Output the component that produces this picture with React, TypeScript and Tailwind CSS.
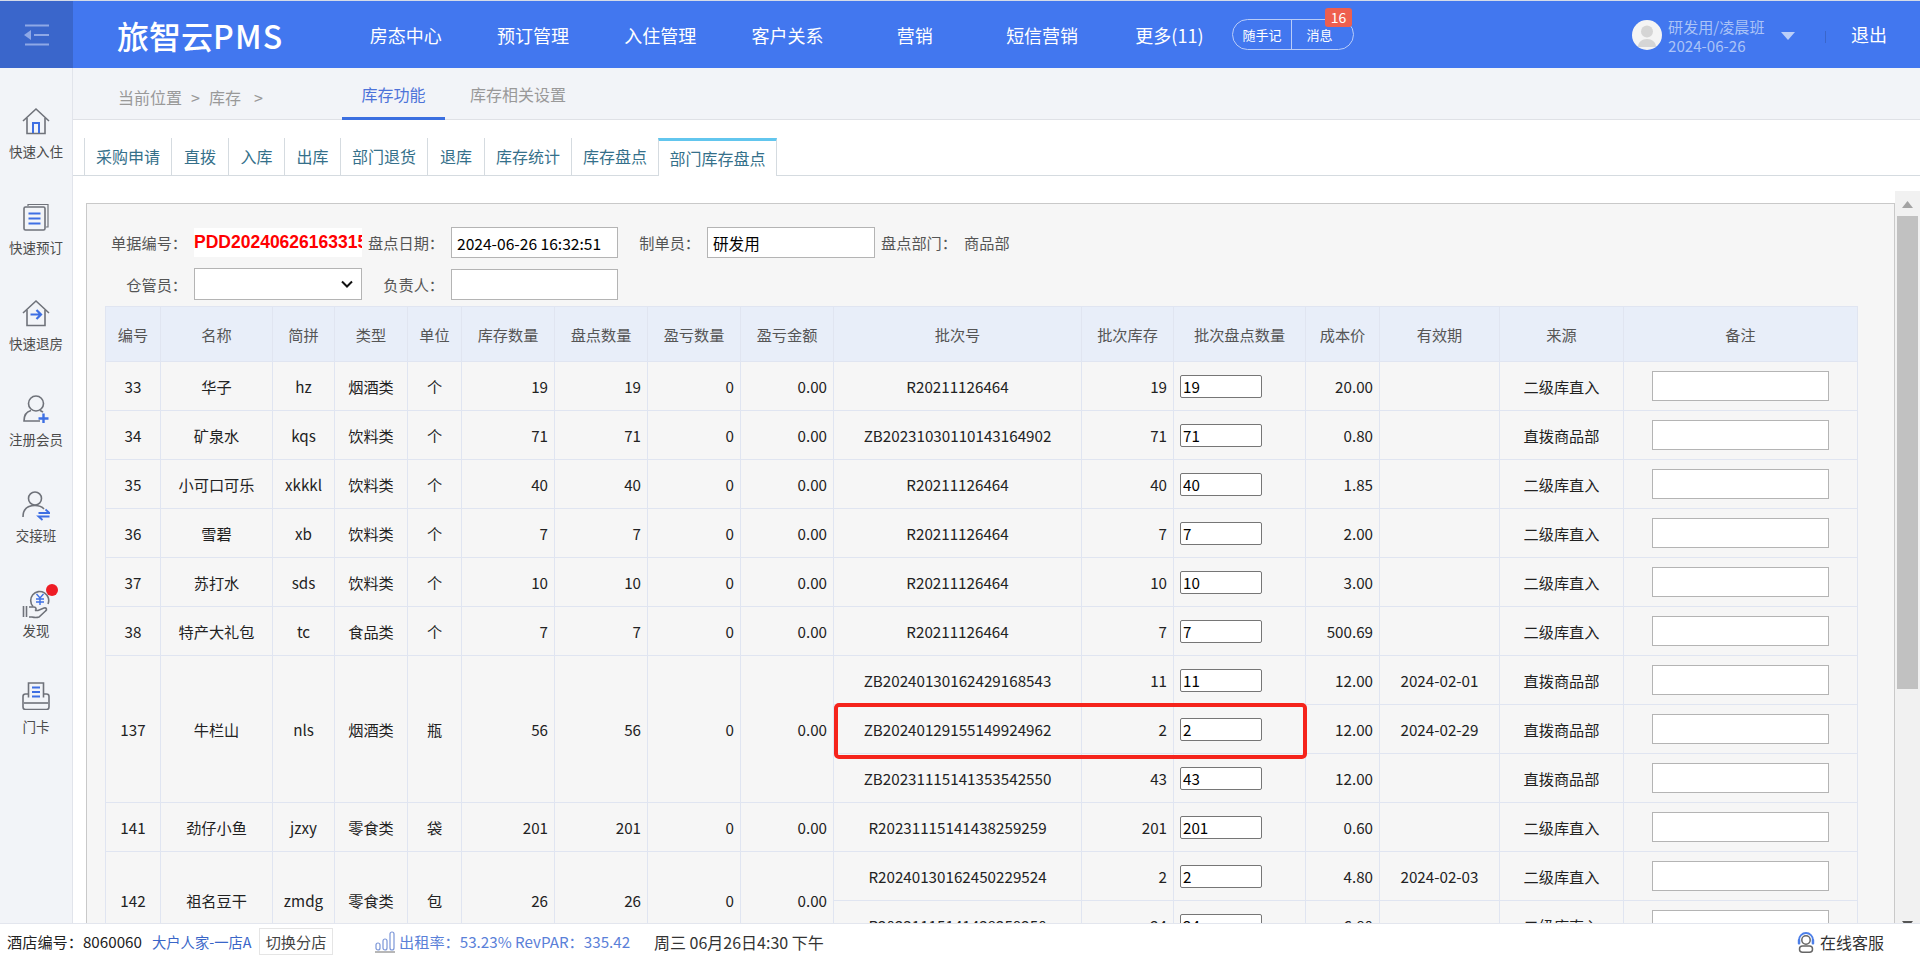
import React from "react"

const GRAY = "#6f727a"
const BLUE = "#3e6fe3"

function HouseIcon() {
  return (
    <svg viewBox="0 0 28 28" className="h-7 w-7" fill="none" strokeWidth="1.6">
      <path d="M1 14 14 2l13 12" stroke={GRAY} />
      <path d="M5 11v15.500h18V11" stroke={GRAY} />
      <path d="M11 26V16h6v10" stroke={BLUE} strokeWidth="2" />
    </svg>
  )
}

function DocIcon() {
  return (
    <svg viewBox="0 0 28 28" className="h-7 w-7" fill="none" strokeWidth="1.6">
      <path d="M6 3V1.500h20V24h-2" stroke={GRAY} strokeWidth="1.200" />
      <rect x="2" y="4" width="21" height="23" rx="1.500" stroke={GRAY} />
      <path d="M6.500 10.500h12M6.500 15.500h12M6.500 20.500h12" stroke={BLUE} strokeWidth="2.200" />
    </svg>
  )
}

function CheckoutIcon() {
  return (
    <svg viewBox="0 0 28 28" className="h-7 w-7" fill="none" strokeWidth="1.6">
      <path d="M1 14 14 2l13 12" stroke={GRAY} />
      <path d="M5 11v15.500h18V11" stroke={GRAY} />
      <path d="M8.500 15.500h10M14.500 11l4.500 4.500-4.500 4.500" stroke={BLUE} strokeWidth="2.200" />
    </svg>
  )
}

function UserAddIcon() {
  return (
    <svg viewBox="0 0 28 28" className="h-7 w-7" fill="none" strokeWidth="1.6">
      <circle cx="14" cy="8.500" r="7.500" stroke={GRAY} />
      <path d="M18 26H2c0-6 3-9.500 7-10.500" stroke={GRAY} />
      <path d="M18 15.500c1.200.4 2.200 1 3 1.800" stroke={GRAY} />
      <path d="M16.500 23.500h10M21.500 18.500v10" stroke={BLUE} strokeWidth="2.400" />
    </svg>
  )
}

function UserSwapIcon() {
  return (
    <svg viewBox="0 0 28 30" className="h-[30px] w-7" fill="none" strokeWidth="1.6">
      <circle cx="13" cy="7.500" r="6.500" stroke={GRAY} />
      <path d="M1 26c0-7 4-11.500 12-11.500 4 0 7 1.200 9 3.500" stroke={GRAY} />
      <path d="M16.500 22h11L23.500 18.500M27.500 25.500h-11l4 3.500" stroke={BLUE} strokeWidth="1.800" />
    </svg>
  )
}

function FindIcon() {
  return (
    <svg viewBox="0 0 28 33" className="h-[33px] w-7" fill="none" strokeWidth="1.6">
      <path d="M11 20.500A9 9 0 1 1 26 18" stroke={GRAY} />
      <path d="M14.500 8l3.500 4 3.500-4M14 13h8M14 16h8M18 12v7" stroke={BLUE} strokeWidth="1.400" />
      <path d="M1.500 20v11M4.500 20v11" stroke={GRAY} />
      <path d="M7 21h5c2 0 3 2.500 1 3.500h3l6-2.500c2.500-.5 3.500 1.500 1.500 3L17 31c-3 1-5 .5-7 0H7" stroke={GRAY} />
    </svg>
  )
}

function CardIcon() {
  return (
    <svg viewBox="0 0 28 28" className="h-7 w-7" fill="none" strokeWidth="1.6">
      <path d="M6.500 15.500V1h15v14.500" stroke={GRAY} />
      <path d="M6 12H3.500C2 12 1 13 1 14.500V25c0 1.500 1 2.500 2.500 2.500h21C26 27.500 27 26.500 27 25V14.500c0-1.500-1-2.500-2.500-2.500H22" stroke={GRAY} />
      <path d="M2 21h24" stroke={GRAY} />
      <path d="M10 5.500h8M10 10h8M10 14.500h8" stroke={BLUE} strokeWidth="1.800" />
    </svg>
  )
}

const sideItems = [
  { label: "快速入住", icon: <HouseIcon /> },
  { label: "快速预订", icon: <DocIcon /> },
  { label: "快速退房", icon: <CheckoutIcon /> },
  { label: "注册会员", icon: <UserAddIcon /> },
  { label: "交接班", icon: <UserSwapIcon /> },
  { label: "发现", icon: <FindIcon />, dot: true },
  { label: "门卡", icon: <CardIcon /> },
]

const navItems = ["房态中心", "预订管理", "入住管理", "客户关系", "营销", "短信营销", "更多(11)"]

const tabs = [
  { label: "采购申请", width: "w-[87px]" },
  { label: "直拨", width: "w-[57px]" },
  { label: "入库", width: "w-[56px]" },
  { label: "出库", width: "w-[56px]" },
  { label: "部门退货", width: "w-[87px]" },
  { label: "退库", width: "w-[57px]" },
  { label: "库存统计", width: "w-[87px]" },
  { label: "库存盘点", width: "w-[87px]" },
]

const colWidths = [
  "w-[55px]", "w-[112px]", "w-[62px]", "w-[73px]", "w-[54px]", "w-[93px]", "w-[93px]", "w-[93px]",
  "w-[93px]", "w-[248px]", "w-[92px]", "w-[132px]", "w-[74px]", "w-[120px]", "w-[124px]", "w-[234px]",
]

const heads = [
  "编号", "名称", "简拼", "类型", "单位", "库存数量", "盘点数量", "盈亏数量", "盈亏金额",
  "批次号", "批次库存", "批次盘点数量", "成本价", "有效期", "来源", "备注",
]

type Batch = { no: string; qty: string; cost: string; expire?: string; source: string }
type Row = { id: string; name: string; py: string; type: string; unit: string; stock: string; batches: Batch[] }

const second = "二级库直入"
const direct = "直拨商品部"

const rows: Row[] = [
  { id: "33", name: "华子", py: "hz", type: "烟酒类", unit: "个", stock: "19", batches: [{ no: "R20211126464", qty: "19", cost: "20.00", source: second }] },
  { id: "34", name: "矿泉水", py: "kqs", type: "饮料类", unit: "个", stock: "71", batches: [{ no: "ZB20231030110143164902", qty: "71", cost: "0.80", source: direct }] },
  { id: "35", name: "小可口可乐", py: "xkkkl", type: "饮料类", unit: "个", stock: "40", batches: [{ no: "R20211126464", qty: "40", cost: "1.85", source: second }] },
  { id: "36", name: "雪碧", py: "xb", type: "饮料类", unit: "个", stock: "7", batches: [{ no: "R20211126464", qty: "7", cost: "2.00", source: second }] },
  { id: "37", name: "苏打水", py: "sds", type: "饮料类", unit: "个", stock: "10", batches: [{ no: "R20211126464", qty: "10", cost: "3.00", source: second }] },
  { id: "38", name: "特产大礼包", py: "tc", type: "食品类", unit: "个", stock: "7", batches: [{ no: "R20211126464", qty: "7", cost: "500.69", source: second }] },
  {
    id: "137", name: "牛栏山", py: "nls", type: "烟酒类", unit: "瓶", stock: "56",
    batches: [
      { no: "ZB20240130162429168543", qty: "11", cost: "12.00", expire: "2024-02-01", source: direct },
      { no: "ZB20240129155149924962", qty: "2", cost: "12.00", expire: "2024-02-29", source: direct },
      { no: "ZB20231115141353542550", qty: "43", cost: "12.00", source: direct },
    ],
  },
  { id: "141", name: "劲仔小鱼", py: "jzxy", type: "零食类", unit: "袋", stock: "201", batches: [{ no: "R20231115141438259259", qty: "201", cost: "0.60", source: second }] },
  {
    id: "142", name: "祖名豆干", py: "zmdg", type: "零食类", unit: "包", stock: "26",
    batches: [
      { no: "R20240130162450229524", qty: "2", cost: "4.80", expire: "2024-02-03", source: second },
      { no: "R20231115141438259250", qty: "24", cost: "6.80", source: second },
    ],
  },
]

const cell = "border border-[#e0e5f1] p-0 text-center"
const num = "border border-[#e0e5f1] py-0 pl-0 pr-[6px] text-right"
const fieldInput = "h-[31px] border border-[#b4b4b4] bg-white px-[5px] text-[15.6px] text-black outline-none"

function Header() {
  return (
    <header className="flex h-[67px] shrink-0 items-center bg-[#4277ef] text-white">
      <div className="flex h-full w-[73px] shrink-0 items-center justify-center bg-[#3a66cb]">
        <svg viewBox="0 0 26 22" className="h-[22px] w-[26px]" fill="none" stroke="#8ea8e6" strokeWidth="2">
          <path d="M1 1.500h24M10 11h15M1 20.500h24" />
          <path d="M0 11l7-5v10z" fill="#8ea8e6" stroke="none" />
        </svg>
      </div>
      <div className="ml-[44px] w-[225px] shrink-0 text-[32px] font-medium leading-none">
        旅智云<span className="tracking-[1.200px]">PMS</span>
      </div>
      <nav className="flex shrink-0 pt-[1px]">
        {navItems.map((item) => (
          <span key={item} className="w-[127.300px] text-center text-[18px]">{item}</span>
        ))}
      </nav>
      <div className="relative ml-[-1px] flex h-[31px] w-[122px] shrink-0 items-center rounded-full border border-[#b9ccf8] text-[13px]">
        <span className="w-[59px] border-r border-[#b9ccf8] text-center leading-[29px]">随手记</span>
        <span className="flex-1 pr-[6px] text-center">消息</span>
        <span className="absolute right-[1px] top-[-12px] flex h-[19px] w-[27px] items-center justify-center rounded-[3px] bg-[#ee5f4e] text-[14px]">16</span>
      </div>
      <div className="ml-[278px] flex h-[30px] w-[30px] shrink-0 items-end justify-center overflow-hidden rounded-full bg-[#f4f4f4]">
        <svg viewBox="0 0 30 30" className="h-[30px] w-[30px]">
          <circle cx="15" cy="11.500" r="6" fill="#d5d5d5" />
          <path d="M6 27c0-5 4-8 9-8s9 3 9 8z" fill="#d5d5d5" />
        </svg>
      </div>
      <div className="ml-[6px] w-[113px] shrink-0 pt-[2px] text-[15.100px] leading-[19px] text-[#abc3f7]">
        <div>研发用/凌晨班</div>
        <div>2024-06-26</div>
      </div>
      <svg viewBox="0 0 14 8" className="mt-[3px] h-2 w-[14px] shrink-0">
        <path d="M0 0h14L7 8z" fill="#bccff8" />
      </svg>
      <div className="ml-[30px] mt-[4px] h-3 w-px shrink-0 bg-[#3a66cb]" />
      <span className="ml-[25px] text-[18px]">退出</span>
    </header>
  )
}

function Sidebar() {
  return (
    <aside className="w-[73px] shrink-0 border-r border-[#e1e4eb] bg-[#f2f4f8] pt-[39px]">
      {sideItems.map((item) => (
        <div key={item.label} className="relative flex h-[95.900px] flex-col items-center">
          <div className="flex h-7 items-start justify-center">{item.icon}</div>
          <div className="mt-[8px] text-[13.500px] leading-4 text-[#4b4b4b]">{item.label}</div>
          {item.dot && <span className="absolute left-[46px] top-[-2px] h-3 w-3 rounded-full bg-[#ee1c25]" />}
        </div>
      ))}
    </aside>
  )
}

function InventoryTable() {
  return (
    <div className="relative ml-[18px] w-[1752px]">
      <table className="w-[1752px] table-fixed border-collapse text-[15.200px] text-[#222]">
        <colgroup>
          {colWidths.map((w, i) => (
            <col key={i} className={w} />
          ))}
        </colgroup>
        <thead>
          <tr className="h-[55px] bg-[#e8eef9] text-[#555]">
            {heads.map((h) => (
              <th key={h} className={cell + " font-normal"}>{h}</th>
            ))}
          </tr>
        </thead>
        <tbody>
          {rows.map((row) =>
            row.batches.map((b, i) => (
              <tr key={b.no + i} className="h-[49px]">
                {i === 0 && (
                  <>
                    <td rowSpan={row.batches.length} className={cell}>{row.id}</td>
                    <td rowSpan={row.batches.length} className={cell}>{row.name}</td>
                    <td rowSpan={row.batches.length} className={cell}>{row.py}</td>
                    <td rowSpan={row.batches.length} className={cell}>{row.type}</td>
                    <td rowSpan={row.batches.length} className={cell}>{row.unit}</td>
                    <td rowSpan={row.batches.length} className={num}>{row.stock}</td>
                    <td rowSpan={row.batches.length} className={num}>{row.stock}</td>
                    <td rowSpan={row.batches.length} className={num}>0</td>
                    <td rowSpan={row.batches.length} className={num}>0.00</td>
                  </>
                )}
                <td className={cell}>{b.no}</td>
                <td className={num}>{b.qty}</td>
                <td className={cell + " text-left"}>
                  <input defaultValue={b.qty} className="ml-[6px] block h-[23px] w-[82px] rounded-[2px] border border-[#767676] bg-white px-[2px] text-[15.200px] text-black outline-none" />
                </td>
                <td className={num}>{b.cost}</td>
                <td className={cell}>{b.expire}</td>
                <td className={cell}>{b.source}</td>
                <td className={cell}>
                  <input className="mx-auto block h-[30px] w-[177px] border border-[#b4b4b4] bg-white outline-none" />
                </td>
              </tr>
            ))
          )}
        </tbody>
      </table>
      <div className="absolute left-[729px] top-[397px] h-[56px] w-[473px] rounded-[5px] border-4 border-[#f5241c]" />
    </div>
  )
}

function Panel() {
  return (
    <section className="mt-[27px] h-[800px] w-[1809px] shrink-0 overflow-hidden border-x border-t border-[#c9c9c9] bg-[#f6f6f6]">
      <div className="mt-[23px] flex h-[31px] items-center text-[15.200px] text-[#555]">
        <label className="w-[100px] text-right">单据编号：</label>
        <div className="ml-[7px] h-[29px] w-[168px] overflow-hidden whitespace-nowrap bg-white font-['Liberation_Sans',sans-serif] text-[17.500px] font-bold leading-[29px] text-[#ff0000]">PDD202406261633155</div>
        <label className="w-[82px] text-right">盘点日期：</label>
        <input defaultValue="2024-06-26 16:32:51" className={"ml-[7px] w-[167px] " + fieldInput} />
        <label className="w-[82px] text-right">制单员：</label>
        <input defaultValue="研发用" className={"ml-[7px] w-[168px] " + fieldInput} />
        <label className="ml-[6px] w-[83px]">盘点部门：</label>
        <span>商品部</span>
      </div>
      <div className="mt-[10px] flex h-[32px] items-center text-[15.200px] text-[#555]">
        <label className="w-[100px] text-right">仓管员：</label>
        <div className="relative ml-[7px] h-[32px] w-[168px]">
          <select className="h-full w-full appearance-none border border-[#b4b4b4] bg-white outline-none" />
          <svg viewBox="0 0 12 8" className="pointer-events-none absolute right-[9px] top-[12px] h-2 w-3" fill="none" stroke="#111" strokeWidth="2">
            <path d="M1 1.500 6 6.500l5-5" />
          </svg>
        </div>
        <label className="w-[82px] text-right">负责人：</label>
        <input className={"ml-[7px] w-[167px] " + fieldInput} />
      </div>
      <div className="mt-[6px]">
        <InventoryTable />
      </div>
    </section>
  )
}

function Scrollbar() {
  return (
    <div className="relative mt-[15px] h-[740px] w-[25px] shrink-0 bg-[#f1f1f1]">
      <svg viewBox="0 0 11 7" className="absolute left-[7px] top-[10px] h-[7px] w-[11px]">
        <path d="M5.500 0 11 7H0z" fill="#a3a3a3" />
      </svg>
      <div className="absolute left-[2px] top-[25px] h-[473px] w-[21px] bg-[#c1c1c1]" />
      <svg viewBox="0 0 11 7" className="absolute left-[7px] top-[730px] h-[7px] w-[11px]">
        <path d="M0 0h11L5.500 7z" fill="#555" />
      </svg>
    </div>
  )
}

function BottomBar() {
  return (
    <footer className="flex h-[36px] shrink-0 items-center border-t border-[#e3e6ee] bg-white text-[15.200px] text-[#222]">
      <span className="ml-[7px] w-[138px]">酒店编号：8060060</span>
      <span className="ml-[7px] w-[107px] text-[14.300px] text-[#3a66c8]">大户人家-一店A</span>
      <span className="flex h-[27px] w-[74px] items-center justify-center border border-[#e5e5e5] text-[#444]">切换分店</span>
      <svg viewBox="0 0 20 22" className="ml-[42px] h-[22px] w-5" fill="none" stroke="#7b96d8" strokeWidth="1.200">
        <rect x="1" y="12" width="4" height="7" rx="2" />
        <rect x="8" y="8" width="4" height="11" rx="2" />
        <rect x="15" y="1" width="4" height="18" rx="2" />
        <path d="M0 21h20" stroke="#999" strokeWidth="1.400" />
      </svg>
      <span className="ml-[4px] w-[237px] whitespace-nowrap text-[#5a80d8]">出租率：53.23% RevPAR：335.42</span>
      <span className="ml-[18px] text-[16px] text-[#333]">周三 06月26日4:30 下午</span>
      <span className="ml-auto mr-[36px] flex items-center text-[16px] text-[#333]">
        <svg viewBox="0 0 18 22" className="mr-[5px] h-[22px] w-[18px]" fill="none" strokeWidth="1.500">
          <path d="M2 9a7 7 0 0 1 14 0" stroke="#4d7fe8" strokeWidth="1.800" />
          <rect x="0.800" y="8" width="2.500" height="5.500" rx="1" fill="#4d7fe8" />
          <rect x="14.700" y="8" width="2.500" height="5.500" rx="1" fill="#4d7fe8" />
          <circle cx="9" cy="9" r="4.200" stroke="#666" />
          <rect x="2.500" y="15" width="13" height="6.200" rx="3" stroke="#666" />
        </svg>
        在线客服
      </span>
    </footer>
  )
}

export default function App() {
  return (
    <div className="flex h-[959px] w-[1920px] flex-col overflow-hidden bg-white font-['Noto_Sans_CJK_SC','Liberation_Sans',sans-serif]">
      <div className="h-px shrink-0 bg-[#d5dbe8]" />
      <Header />
      <div className="flex min-h-0 flex-1">
        <Sidebar />
        <main className="flex min-w-0 flex-1 flex-col">
          <div className="flex h-[52px] shrink-0 items-stretch border-b border-[#dfe1e6] bg-[#f2f4f8] text-[16px] text-[#999]">
            <div className="ml-[45px] flex w-[224px] items-center pt-[6px]">
              <span>当前位置</span>
              <span className="ml-[9px]">&gt;</span>
              <span className="ml-[9px]">库存</span>
              <span className="ml-[13px]">&gt;</span>
            </div>
            <div className="flex h-[52px] w-[103px] items-center justify-center border-b-[3px] border-[#3b6fe0] pt-[2px] text-[#4d73d9]">库存功能</div>
            <div className="ml-[25px] flex items-center">库存相关设置</div>
          </div>
          <div className="flex h-[56px] shrink-0 items-end bg-white">
            <div className="flex h-[38px] flex-1 border-b border-[#d5dbe0] pl-[11px] text-[16px] text-[#35708a]">
              {tabs.map((t) => (
                <div key={t.label} className={t.width + " flex h-[37px] items-center justify-center border-y-0 border-l border-[#d5dbe0] pb-[2px]"}>{t.label}</div>
              ))}
              <div className="flex h-[38px] w-[119px] items-center justify-center border-x border-t-[3px] border-[#d5dbe0] border-t-[#62c6ee] bg-white pb-[1px]">部门库存盘点</div>
            </div>
          </div>
          <div className="flex min-h-0 flex-1 overflow-hidden bg-white pl-[13px]">
            <Panel />
            <Scrollbar />
          </div>
        </main>
      </div>
      <BottomBar />
    </div>
  )
}
